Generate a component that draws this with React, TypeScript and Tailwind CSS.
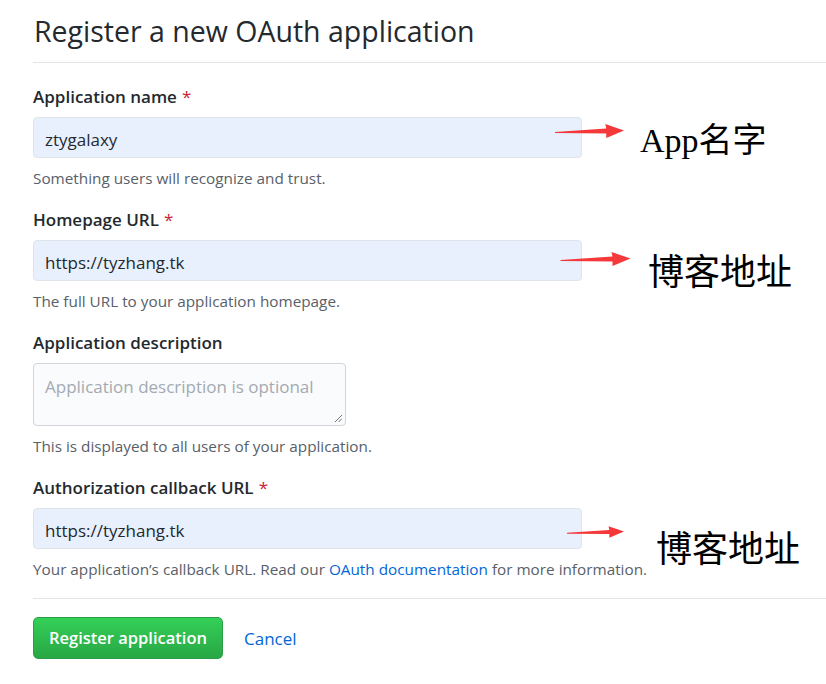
function Arrow({ className }: { className: string }) {
  return (
    <svg viewBox="0 0 70 16" className={className} fill="#f5383a">
      <polygon points="0,9 52,5.5 51,1 70,7.5 52,15 52,10.5 0,10" />
    </svg>
  );
}

function Field({
  label,
  required,
  value,
  help,
}: {
  label: string;
  required?: boolean;
  value: string;
  help: React.ReactNode;
}) {
  return (
    <div className="mt-[20px] first:mt-0">
      <div className="h-[24px] leading-[24px] text-[17px] font-semibold text-[#24292e]">
        {label}
        {required && <span className="ml-[5px] font-normal text-[#cb2431]">*</span>}
      </div>
      <div className="mt-[8px] w-[549px] h-[41px] rounded-[4px] border border-[#dfe3ea] bg-[#e8f0fe] px-[11px] pt-[4px] flex items-center text-[17px] text-[#24292e]">
        {value}
      </div>
      <div className="mt-[10px] h-[20px] leading-[20px] text-[15.3px] text-[#586069]">{help}</div>
    </div>
  );
}

const note = { fontFamily: '"Liberation Serif", "Noto Sans CJK SC", serif' };

export default function App() {
  return (
    <div
      className="relative w-[826px] h-[684px] bg-white overflow-hidden pl-[33px]"
      style={{ fontFamily: '"Open Sans", "Noto Sans", sans-serif' }}
    >
      <div className="pt-[11px] pb-[11px] border-b border-[#e1e4e8]">
        <h2 className="h-[40px] leading-[40px] text-[28.5px] text-[#24292e] pl-[1px]">
          Register a new OAuth application
        </h2>
      </div>

      <div className="mt-[22px]">
        <Field
          label="Application name"
          required
          value="ztygalaxy"
          help="Something users will recognize and trust."
        />
        <Field
          label="Homepage URL"
          required
          value="https://tyzhang.tk"
          help="The full URL to your application homepage."
        />

        <div className="mt-[20px]">
          <div className="h-[24px] leading-[24px] text-[17px] font-semibold text-[#24292e]">
            Application description
          </div>
          <div className="mt-[8px] w-[313px] h-[63px] rounded-[4px] border border-[#d1d5da] bg-[#fafbfc] px-[11px] pt-[10px] text-[17px] text-[#a3aab1] relative">
            Application description is optional
            <svg className="absolute right-[3px] bottom-[3px] w-[8px] h-[8px]" viewBox="0 0 8 8" stroke="#777" strokeWidth="1">
              <line x1="1" y1="8" x2="8" y2="1" />
              <line x1="4.5" y1="8" x2="8" y2="4.5" />
            </svg>
          </div>
          <div className="mt-[10px] h-[20px] leading-[20px] text-[15.3px] text-[#586069]">
            This is displayed to all users of your application.
          </div>
        </div>

        <Field
          label="Authorization callback URL"
          required
          value="https://tyzhang.tk"
          help={
            <>
              Your application’s callback URL. Read our{" "}
              <span className="text-[#0366d6]">OAuth documentation</span> for more information.
            </>
          }
        />
      </div>

      <div className="mt-[19px] border-t border-[#e1e4e8]" />

      <div className="mt-[18px] flex items-center">
        <button className="w-[190px] h-[42px] rounded-[5px] border border-[#2a9e46] bg-gradient-to-b from-[#34d058] to-[#28a745] text-white text-[16.5px] font-semibold pt-[1px]">
          Register application
        </button>
        <span className="ml-[21px] text-[17px] text-[#0366d6] pt-[1px]">Cancel</span>
      </div>

      <Arrow className="absolute left-[555px] top-[123px] w-[69px] h-[16px]" />
      <Arrow className="absolute left-[558px] top-[251px] w-[75px] h-[16px]" />
      <Arrow className="absolute left-[567px] top-[524px] w-[57px] h-[16px]" />

      <div className="absolute left-[640px] top-[119px] text-[34px] leading-[44px] text-black" style={note}>
        App名字
      </div>
      <div className="absolute left-[648px] top-[250px] text-[36px] leading-[46px] text-black" style={note}>
        博客地址
      </div>
      <div className="absolute left-[656px] top-[527px] text-[36px] leading-[46px] text-black" style={note}>
        博客地址
      </div>
    </div>
  );
}
